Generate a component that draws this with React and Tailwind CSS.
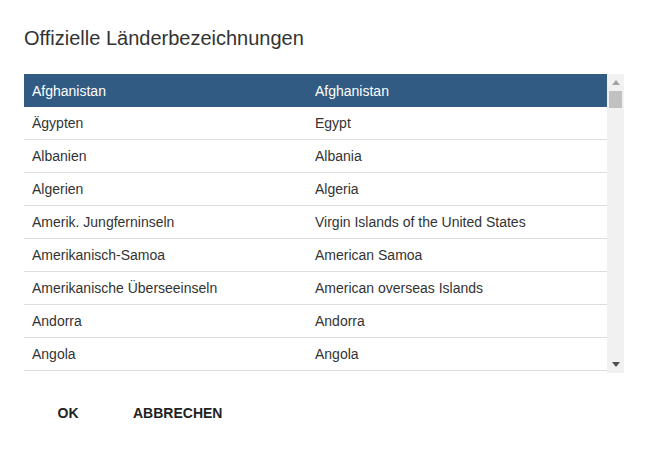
import React from 'react';

const rows = [
  ['Ägypten', 'Egypt'],
  ['Albanien', 'Albania'],
  ['Algerien', 'Algeria'],
  ['Amerik. Jungferninseln', 'Virgin Islands of the United States'],
  ['Amerikanisch-Samoa', 'American Samoa'],
  ['Amerikanische Überseeinseln', 'American overseas Islands'],
  ['Andorra', 'Andorra'],
  ['Angola', 'Angola'],
];

const App = () => {
  return (
    <div className="w-[645px] h-[450px] bg-white font-['Liberation_Sans',Arial,sans-serif] text-[#333]">
      <h2 className="pl-6 pt-[26px] text-[20px] leading-6 text-[#333]">
        Offizielle Länderbezeichnungen
      </h2>

      <div className="mt-6 ml-6 flex w-[600px] h-[299px]">
        {/* table */}
        <div className="flex-1 overflow-hidden">
          <div className="grid grid-cols-[283px_1fr] h-[33px] items-center bg-[#315b83] text-white text-[14px]">
            <div className="pl-2 pt-px">Afghanistan</div>
            <div className="pl-2 pt-px">Afghanistan</div>
          </div>
          {rows.map(([de, en]) => (
            <div
              key={de}
              className="grid grid-cols-[283px_1fr] h-[33px] items-center border-b border-[#dddddd] text-[14px]"
            >
              <div className="pl-2 pt-px">{de}</div>
              <div className="pl-2 pt-px">{en}</div>
            </div>
          ))}
        </div>

        {/* scrollbar */}
        <div className="w-[17px] bg-[#f1f1f1] flex flex-col items-center">
          <div className="h-[17px] flex items-center justify-center">
            <svg width="8" height="5" viewBox="0 0 8 5">
              <path d="M0 5 L4 0 L8 5 Z" fill="#a3a3a3" />
            </svg>
          </div>
          <div className="w-[13px] h-[17px] bg-[#c1c1c1]" />
          <div className="flex-1" />
          <div className="h-[17px] flex items-center justify-center">
            <svg width="8" height="5" viewBox="0 0 8 5">
              <path d="M0 0 L4 5 L8 0 Z" fill="#505050" />
            </svg>
          </div>
        </div>
      </div>

      <div className="mt-[22px] pl-9 flex gap-[17px]">
        <button className="min-w-[64px] h-9 px-4 text-[14px] font-bold text-[#222] uppercase">
          OK
        </button>
        <button className="min-w-[64px] h-9 px-4 text-[14px] font-bold text-[#222] uppercase">
          Abbrechen
        </button>
      </div>
    </div>
  );
};

export default App;
